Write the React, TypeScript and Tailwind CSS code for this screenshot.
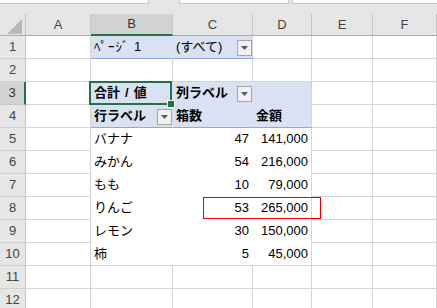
import React from "react";

const base =
  "relative flex items-center h-[23px] border-r border-b px-[3px] whitespace-nowrap text-[13px] text-black";
const normal = base + " bg-white border-[#d4d4d4]";

function Drop() {
  return (
    <div className="absolute right-0 top-[4px] w-[15px] h-[16px] bg-[#f1f1f1] border border-[#a6a6a6] flex items-center justify-center">
      <svg width="7" height="4" viewBox="0 0 7 4">
        <polygon points="0,0 7,0 3.5,4" fill="#595959" />
      </svg>
    </div>
  );
}

function RowHead({ n, sel }: { n: number; sel?: boolean }) {
  return (
    <div
      className={
        sel
          ? "flex items-center justify-center h-[23px] bg-[#d2d2d2] border-b border-b-[#c8c8c8] border-r-2 border-r-[#217346] text-[13px] text-[#333]"
          : "flex items-center justify-center h-[23px] bg-[#e6e6e6] border-r border-b border-r-[#c6c6c6] border-b-[#d0d0d0] text-[13px] text-[#444]"
      }
    >
      {n}
    </div>
  );
}

function E() {
  return <div className={normal} />;
}

const pivotData = [
  ["バナナ", "47", "141,000"],
  ["みかん", "54", "216,000"],
  ["もも", "10", "79,000"],
  ["りんご", "53", "265,000"],
  ["レモン", "30", "150,000"],
  ["柿", "5", "45,000"],
];

export default function App() {
  return (
    <div className="w-[437px] h-[308px] overflow-hidden bg-[#e6e6e6] font-['Liberation_Sans','Noto_Sans_CJK_JP',sans-serif]">
      {/* top strip */}
      <div className="flex h-[14px] items-start">
        <div className="w-[149px] h-[4px] bg-white border-b border-r border-[#c6c6c6]" />
        <div className="ml-[30px] w-[110px] h-[4px] bg-white border-b border-l border-r border-[#c6c6c6]" />
        <div className="ml-[3px] flex-1 h-[4px] bg-white border-b border-l border-[#c6c6c6]" />
      </div>
      <div className="grid grid-cols-[26px_65px_82px_80px_59px_61px_64px]">
        {/* column headers */}
        <div className="relative h-[22px] bg-[#e6e6e6] border-r border-b border-r-[#c6c6c6] border-b-[#ababab]">
          <svg className="absolute left-[7px] top-[5px]" width="15" height="15" viewBox="0 0 15 15">
            <polygon points="15,0 15,15 0,15" fill="#b9b9b9" />
          </svg>
        </div>
        <div className="flex items-center justify-center h-[22px] bg-[#e6e6e6] border-r border-b border-r-[#c6c6c6] border-b-[#ababab] text-[13px] text-[#444]">A</div>
        <div className="flex items-center justify-center h-[22px] bg-[#d2d2d2] border-r border-r-[#c6c6c6] border-b-2 border-b-[#217346] text-[13px] text-[#333]">B</div>
        <div className="flex items-center justify-center h-[22px] bg-[#e6e6e6] border-r border-b border-r-[#c6c6c6] border-b-[#ababab] text-[13px] text-[#444]">C</div>
        <div className="flex items-center justify-center h-[22px] bg-[#e6e6e6] border-r border-b border-r-[#c6c6c6] border-b-[#ababab] text-[13px] text-[#444]">D</div>
        <div className="flex items-center justify-center h-[22px] bg-[#e6e6e6] border-r border-b border-r-[#c6c6c6] border-b-[#ababab] text-[13px] text-[#444]">E</div>
        <div className="flex items-center justify-center h-[22px] bg-[#e6e6e6] border-r border-b border-r-[#c6c6c6] border-b-[#ababab] text-[13px] text-[#444]">F</div>

        {/* row 1 */}
        <RowHead n={1} />
        <E />
        <div className={base + " bg-[#d9e1f2] border-r-[#d9e1f2] border-b-[#8ea9db] tracking-[1px]"}>ﾍﾟｰｼﾞ 1</div>
        <div className={base + " bg-[#d9e1f2] border-r-[#d4d4d4] border-b-[#8ea9db]"}>
          (すべて)
          <Drop />
        </div>
        <E />
        <E />
        <E />

        {/* row 2 */}
        <RowHead n={2} />
        <E />
        <E />
        <E />
        <E />
        <E />
        <E />

        {/* row 3 */}
        <RowHead n={3} sel />
        <E />
        <div className={base + " bg-[#d9e1f2] border-r-[#d9e1f2] border-b-[#d9e1f2] font-bold"}>
          合計<span className="mx-[5px]">/</span>値
          <div className="absolute left-[-2px] top-[-1px] right-0 bottom-[-1px] border-2 border-[#217346] z-10">
            <div className="absolute right-[-4px] bottom-[-4px] w-[6px] h-[6px] bg-[#217346] outline outline-1 outline-white" />
          </div>
        </div>
        <div className={base + " bg-[#d9e1f2] border-r-[#d9e1f2] border-b-[#d9e1f2] font-bold"}>
          列ラベル
          <Drop />
        </div>
        <div className={base + " bg-[#d9e1f2] border-r-[#d4d4d4] border-b-[#d9e1f2]"} />
        <E />
        <E />

        {/* row 4 */}
        <RowHead n={4} />
        <E />
        <div className={base + " bg-[#d9e1f2] border-r-[#d9e1f2] border-b-[#8ea9db] font-bold"}>
          行ラベル
          <Drop />
        </div>
        <div className={base + " bg-[#d9e1f2] border-r-[#d9e1f2] border-b-[#8ea9db] font-bold"}>箱数</div>
        <div className={base + " bg-[#d9e1f2] border-r-[#d4d4d4] border-b-[#8ea9db] font-bold"}>金額</div>
        <E />
        <E />

        {pivotData.map((r, i) => {
          const last = i === pivotData.length - 1;
          return (
            <React.Fragment key={i}>
              <RowHead n={5 + i} />
              <E />
              <div
                className={
                  last
                    ? base + " bg-white border-r-white border-b-[#d4d4d4]"
                    : base + " bg-white border-r-white border-b-white"
                }
              >
                {r[0]}
              </div>
              <div
                className={
                  last
                    ? base + " justify-end bg-white border-r-white border-b-[#d4d4d4] text-[12.5px]"
                    : base + " justify-end bg-white border-r-white border-b-white text-[12.5px]"
                }
              >
                {r[1]}
                {i === 3 && (
                  <div className="absolute left-[30px] top-0 w-[118px] h-[22px] border border-[#e60000] z-10" />
                )}
              </div>
              <div
                className={
                  last
                    ? base + " justify-end bg-white border-r-[#d4d4d4] border-b-[#d4d4d4] text-[12.5px]"
                    : base + " justify-end bg-white border-r-[#d4d4d4] border-b-white text-[12.5px]"
                }
              >
                {r[2]}
              </div>
              <E />
              <E />
            </React.Fragment>
          );
        })}

        {[11, 12].map((n) => (
          <React.Fragment key={n}>
            <RowHead n={n} />
            <E />
            <E />
            <E />
            <E />
            <E />
            <E />
          </React.Fragment>
        ))}
      </div>
    </div>
  );
}
